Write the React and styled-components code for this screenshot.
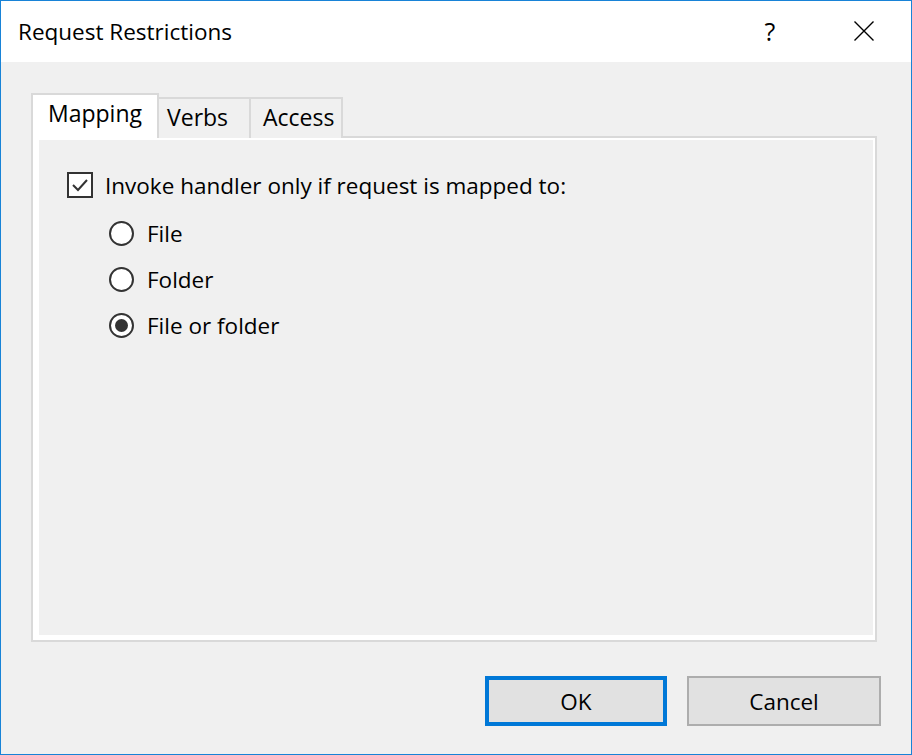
import styled, {createGlobalStyle} from "styled-components";
import {useState} from "react";

const GlobalStyle = createGlobalStyle`
  html, body {
    margin: 0;
    padding: 0;
    background: #f0f0f0;
  }
  body {
    font-family: "Open Sans", "Noto Sans", "Liberation Sans", sans-serif;
    color: #000;
  }
`;

const Window = styled.div`
  width: 912px;
  height: 755px;
  box-sizing: border-box;
  border: 1px solid #1883d7;
  background: #f0f0f0;
  display: flex;
  flex-direction: column;
`;

const TitleBar = styled.div`
  height: 61px;
  background: #ffffff;
  display: flex;
  align-items: center;
  padding-left: 17px;

  .title {
    flex: 1;
    font-size: 22.5px;
    margin-top: -1px;
  }

  .help {
    font-size: 25px;
    width: 20px;
    text-align: center;
    margin-right: 74px;
    margin-top: -2px;
  }

  .close {
    width: 20px;
    height: 20px;
    margin-right: 37px;
    margin-top: -2px;
  }
`;

const Body = styled.div`
  flex: 1;
  display: flex;
  flex-direction: column;
  padding: 31px 34px 0 30px;
`;

const TabStrip = styled.div`
  display: flex;
  align-items: flex-end;
  height: 45px;
`;

const Tab = styled.div`
  box-sizing: border-box;
  width: ${props => props.$w}px;
  height: ${props => props.$active ? 45 : 41}px;
  padding-left: ${props => props.$pad}px;
  padding-bottom: ${props => props.$active ? 8 : 4}px;
  display: flex;
  align-items: center;
  font-size: 23px;
  background: ${props => props.$active ? '#ffffff' : '#f0f0f0'};
  border: 2px solid #d9d9d9;
  border-bottom: none;
  border-left: ${props => props.$first ? '2px solid #d9d9d9' : 'none'};
  position: relative;
  z-index: ${props => props.$active ? 1 : 0};
  cursor: default;
`;

const Panel = styled.div`
  margin-top: -2px;
  height: 506px;
  box-sizing: border-box;
  border: 2px solid #d9d9d9;
  background: #ffffff;
  padding: 2px 2px 5px 6px;
  display: flex;
`;

const PanelInner = styled.div`
  flex: 1;
  background: #f0f0f0;
  padding: 22px 0 0 28px;
`;

const Row = styled.label`
  height: 46px;
  display: flex;
  align-items: center;
  font-size: 22.5px;
  margin-left: ${props => props.$indent || 0}px;
  cursor: default;
`;

const CheckBox = styled.span`
  width: 26px;
  height: 26px;
  box-sizing: border-box;
  border: 2px solid #333333;
  background: #ffffff;
  margin-right: 12px;
  display: flex;
  align-items: center;
  justify-content: center;
`;

const RadioGroup = styled.div`
  margin-top: 2px;
`;

const Radio = styled.span`
  width: 25px;
  height: 25px;
  box-sizing: border-box;
  border-radius: 50%;
  border: 2px solid #333333;
  background: #ffffff;
  margin-right: 13px;
  display: flex;
  align-items: center;
  justify-content: center;

  &::after {
    content: "";
    display: ${props => props.$checked ? 'block' : 'none'};
    width: 13px;
    height: 13px;
    border-radius: 50%;
    background: #333333;
  }
`;

const Footer = styled.div`
  margin-top: 34px;
  display: flex;
  justify-content: flex-end;
  gap: 20px;
  margin-right: -4px;
`;

const Button = styled.button`
  height: 50px;
  width: ${props => props.$w}px;
  box-sizing: border-box;
  background: #e1e1e1;
  border: ${props => props.$primary ? '4px solid #0078d7' : '2px solid #adadad'};
  font-family: inherit;
  font-size: 22.5px;
  color: #000;
  padding: 0;
  cursor: default;
`;

const tabs = [
    {name: 'Mapping', w: 128, pad: 15},
    {name: 'Verbs', w: 92, pad: 8},
    {name: 'Access', w: 92, pad: 12},
];

const options = ['File', 'Folder', 'File or folder'];

const App = () => {
    const [active, setActive] = useState('Mapping');
    const [mapped, setMapped] = useState(true);
    const [choice, setChoice] = useState('File or folder');

    return (
        <>
            <GlobalStyle/>
            <Window>
                <TitleBar>
                    <div className="title">Request Restrictions</div>
                    <div className="help">?</div>
                    <svg className="close" viewBox="0 0 20 20">
                        <path d="M0.5 0.5 L19.5 19.5 M19.5 0.5 L0.5 19.5" stroke="#000" strokeWidth="1.4" fill="none"/>
                    </svg>
                </TitleBar>
                <Body>
                    <TabStrip>
                        {tabs.map((t, i) => (
                            <Tab key={t.name} $w={t.w} $pad={t.pad} $first={i === 0}
                                 $active={active === t.name} onClick={() => setActive(t.name)}>
                                {t.name}
                            </Tab>
                        ))}
                    </TabStrip>
                    <Panel>
                        <PanelInner>
                            <Row onClick={() => setMapped(!mapped)}>
                                <CheckBox>
                                    {mapped && (
                                        <svg width="18" height="18" viewBox="0 0 18 18">
                                            <path d="M2 9 L7 14 L16 4" stroke="#333" strokeWidth="2" fill="none"/>
                                        </svg>
                                    )}
                                </CheckBox>
                                Invoke handler only if request is mapped to:
                            </Row>
                            <RadioGroup>
                                {options.map(o => (
                                    <Row key={o} $indent={42} onClick={() => setChoice(o)}>
                                        <Radio $checked={choice === o}/>
                                        {o}
                                    </Row>
                                ))}
                            </RadioGroup>
                        </PanelInner>
                    </Panel>
                    <Footer>
                        <Button $primary $w={182}>OK</Button>
                        <Button $w={194}>Cancel</Button>
                    </Footer>
                </Body>
            </Window>
        </>
    );
};

export default App;
